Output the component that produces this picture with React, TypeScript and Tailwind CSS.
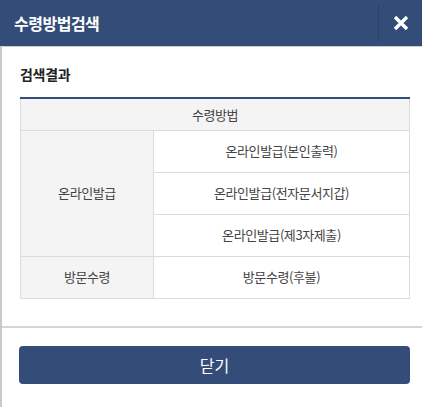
import React from 'react'

const font = { fontFamily: '"Noto Sans CJK KR", "Noto Sans", sans-serif' }

export default function App() {
    const rows = ['온라인발급(본인출력)', '온라인발급(전자문서지갑)', '온라인발급(제3자제출)']

    return (
        <div className="w-[422px] h-[407px] bg-white flex flex-col overflow-hidden" style={font}>
            {/* 헤더 */}
            <div className="h-[47px] bg-[#344c78] flex items-center shrink-0 border-b border-[#c8ccd4]">
                <h1 className="flex-1 pl-[14px] text-white text-[16px] font-bold tracking-[-0.5px]">수령방법검색</h1>
                <div className="w-px h-[37px] bg-[#2b4068]" />
                <button className="w-[43px] h-full flex items-center justify-center">
                    <svg width="16" height="16" viewBox="0 0 16 16">
                        <path d="M2 2 L14 14 M14 2 L2 14" stroke="#fff" strokeWidth="3.4" strokeLinecap="butt" />
                    </svg>
                </button>
            </div>

            {/* 본문 */}
            <div className="flex-1 border-l-2 border-[#c9c9c9] flex flex-col">
                <div className="px-[18px] pt-[17px] h-[281px] border-b-2 border-[#d6d6d6]">
                    <h2 className="text-[14px] font-bold text-[#222] tracking-[-0.3px] leading-[20px] mb-[13px]">검색결과</h2>
                    <table className="w-[390px] border-collapse border-t-2 border-t-[#344c78] text-[13px] text-[#444] tracking-[-0.4px]">
                        <thead>
                            <tr className="h-[32px] bg-[#f4f4f4]">
                                <th colSpan={2} className="border border-[#dcdcdc] border-t-0 font-normal">수령방법</th>
                            </tr>
                        </thead>
                        <tbody>
                            {rows.map((r, i) => (
                                <tr key={r} className="h-[42px]">
                                    {i === 0 && (
                                        <td rowSpan={3} className="w-[133px] bg-[#f4f4f4] border border-[#dcdcdc] text-center">
                                            온라인발급
                                        </td>
                                    )}
                                    <td className="border border-[#dcdcdc] text-center">{r}</td>
                                </tr>
                            ))}
                            <tr className="h-[42px]">
                                <td className="bg-[#f4f4f4] border border-[#dcdcdc] text-center">방문수령</td>
                                <td className="border border-[#dcdcdc] text-center">방문수령(후불)</td>
                            </tr>
                        </tbody>
                    </table>
                </div>

                {/* 하단 */}
                <div className="pl-[17px] pt-[18px]">
                    <button className="w-[391px] h-[38px] rounded-[4px] bg-[#344c78] text-white text-[16px]">닫기</button>
                </div>
            </div>
        </div>
    )
}
